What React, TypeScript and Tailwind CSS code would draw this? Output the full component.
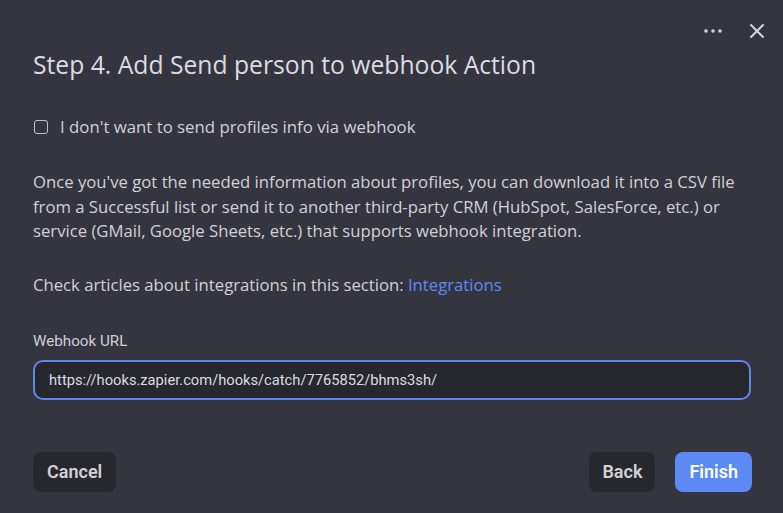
import { useState } from 'react'

function DotsIcon() {
  return (
    <svg width="20" height="6" viewBox="0 0 20 6" fill="#d4d4d8" aria-hidden="true">
      <circle cx="3" cy="3" r="1.8" />
      <circle cx="10" cy="3" r="1.8" />
      <circle cx="17" cy="3" r="1.8" />
    </svg>
  )
}

function CloseIcon() {
  return (
    <svg width="16" height="16" viewBox="0 0 16 16" fill="none" aria-hidden="true">
      <path d="M2 2L14 14M14 2L2 14" stroke="#d4d4d8" strokeWidth="2" strokeLinecap="round" />
    </svg>
  )
}

export default function App() {
  const [skip, setSkip] = useState(false)
  const [url, setUrl] = useState('https://hooks.zapier.com/hooks/catch/7765852/bhms3sh/')

  return (
    <div
      className="w-[783px] h-[513px] bg-[#35353f] text-[#d2d2d6] relative"
      style={{ fontFamily: '"Open Sans", "Noto Sans", sans-serif' }}
    >
      {/* Header actions */}
      <div className="absolute top-[23px] right-[18px] flex items-center gap-[26px]">
        <button aria-label="More"><DotsIcon /></button>
        <button aria-label="Close"><CloseIcon /></button>
      </div>

      <div className="px-[33px] pt-[48px] flex flex-col h-full">
        <h2 className="text-[24.7px] leading-[34px] text-[#dcdce0]">
          Step 4. Add Send person to webhook Action
        </h2>

        <label className="mt-[34px] flex items-center gap-[12px] text-[16.8px] leading-[22px] cursor-pointer">
          <span
            className={`w-[14px] h-[14px] rounded-[3px] border-[1.5px] border-[#c4c4c8] ml-[1px] ${skip ? 'bg-[#5b8af5]' : ''}`}
          />
          <input type="checkbox" className="hidden" checked={skip} onChange={() => setSkip(!skip)} />
          <span>I don't want to send profiles info via webhook</span>
        </label>

        <p className="mt-[32px] w-[718px] text-[16.7px] leading-[24.5px]">
          Once you've got the needed information about profiles, you can download it into a CSV file
          from a Successful list or send it to another third-party CRM (HubSpot, SalesForce, etc.) or
          service (GMail, Google Sheets, etc.) that supports webhook integration.
        </p>

        <p className="mt-[29px] text-[16.7px] leading-[24px]">
          Check articles about integrations in this section:{' '}
          <a href="#" className="text-[#5b8af5]">Integrations</a>
        </p>

        <label className="mt-[35px] text-[15.2px] leading-[18px] text-[#cfcfd3]" style={{ fontFamily: 'Roboto, sans-serif' }}>
          Webhook URL
        </label>

        <input
          value={url}
          onChange={(e) => setUrl(e.target.value)}
          className="mt-[10px] w-[718px] h-[40px] rounded-[10px] border-2 border-[#5b87f0] bg-[#27282d] px-[14px] text-[14.7px] text-[#dcdce0] outline-none"
          style={{ fontFamily: 'Roboto, sans-serif' }}
        />

        <div className="mt-[52px] flex items-center w-[719px]">
          <button
            className="h-[40px] px-[14px] rounded-[8px] bg-[#27282d] text-[#d2d2d6] text-[18px] font-semibold"
            style={{ fontFamily: 'Roboto, sans-serif' }}
          >
            Cancel
          </button>
          <div className="flex-1" />
          <button
            className="h-[40px] px-[13px] rounded-[8px] bg-[#27282d] text-[#d2d2d6] text-[18px] font-semibold"
            style={{ fontFamily: 'Roboto, sans-serif' }}
          >
            Back
          </button>
          <button
            className="ml-[20px] h-[40px] px-[14px] rounded-[8px] bg-[#5b8af5] text-white text-[18px] font-semibold"
            style={{ fontFamily: 'Roboto, sans-serif' }}
          >
            Finish
          </button>
        </div>
      </div>
    </div>
  )
}
